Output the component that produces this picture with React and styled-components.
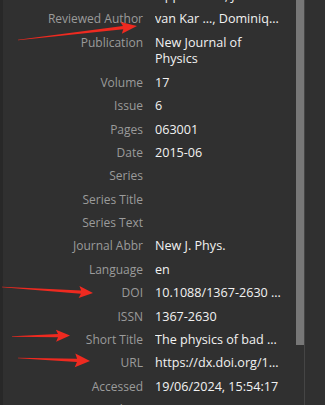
import React from "react";
import styled, { createGlobalStyle } from "styled-components";

const GlobalStyle = createGlobalStyle`
  html, body {
    margin: 0;
    padding: 0;
    height: 100%;
    overflow: hidden;
    background: #303030;
  }
  #root {
    height: 100%;
  }
`;

const fields = [
  { label: "Reviewed Author", value: "Oppenheim, Jonathan" },
  { label: "Reviewed Author", value: "van Kar …, Dominiq…" },
  { label: "Publication", value: "New Journal of Physics", wrap: true },
  { label: "Volume", value: "17" },
  { label: "Issue", value: "6" },
  { label: "Pages", value: "063001" },
  { label: "Date", value: "2015-06" },
  { label: "Series", value: "" },
  { label: "Series Title", value: "" },
  { label: "Series Text", value: "" },
  { label: "Journal Abbr", value: "New J. Phys." },
  { label: "Language", value: "en" },
  { label: "DOI", value: "10.1088/1367-2630 …" },
  { label: "ISSN", value: "1367-2630" },
  { label: "Short Title", value: "The physics of bad …" },
  { label: "URL", value: "https://dx.doi.org/1…" },
  { label: "Accessed", value: "19/06/2024, 15:54:17" },
  { label: "Archive", value: "" },
];

// annotation arrows drawn over the screenshot: tail, tip, head length, head half-width
const arrows = [
  { t: [18, 40], h: [137, 26], len: 14, half: 6 },
  { t: [2, 287], h: [93, 293], len: 12, half: 6 },
  { t: [12, 336.5], h: [70, 335.5], len: 12, half: 6 },
  { t: [18, 358], h: [90, 361], len: 13, half: 7 },
];

function arrowPoints({ t, h, len, half }) {
  const dx = h[0] - t[0];
  const dy = h[1] - t[1];
  const l = Math.hypot(dx, dy);
  const ux = dx / l;
  const uy = dy / l;
  const nx = -uy;
  const ny = ux;
  const bx = h[0] - ux * len;
  const by = h[1] - uy * len;
  const pt = (x, y) => `${x.toFixed(2)},${y.toFixed(2)}`;
  return [
    pt(t[0] + nx * 0.3, t[1] + ny * 0.3),
    pt(bx + nx * 1.6, by + ny * 1.6),
    pt(bx - ux * 2 + nx * half, by - uy * 2 + ny * half),
    pt(h[0], h[1]),
    pt(bx - ux * 2 - nx * half, by - uy * 2 - ny * half),
    pt(bx - nx * 1.6, by - ny * 1.6),
    pt(t[0] - nx * 0.3, t[1] - ny * 0.3),
  ].join(" ");
}

function App() {
  return (
    <>
      <GlobalStyle />
      <Window>
        <Edge />
        <Pane>
          <Fields>
            {fields.map((f, i) => (
              <Row key={i}>
                <Label>{f.label}</Label>
                <Value $wrap={f.wrap}>{f.value}</Value>
              </Row>
            ))}
          </Fields>
        </Pane>
        <ScrollTrack>
          <Thumb />
        </ScrollTrack>
        <Splitter />
        <SidePane />
        <Annotations viewBox="0 0 325 405">
          {arrows.map((a, i) => (
            <polygon key={i} points={arrowPoints(a)} fill="#ee2a20" />
          ))}
        </Annotations>
      </Window>
    </>
  );
}

const Window = styled.div`
  position: relative;
  display: flex;
  width: 325px;
  height: 405px;
  overflow: hidden;
  background: #303030;
  font-family: "Open Sans", "Noto Sans", sans-serif;
  font-size: 12px;
`;

const Edge = styled.div`
  width: 3px;
  flex: none;
  background: #282828;
`;

const Pane = styled.div`
  flex: 1;
  min-width: 0;
  overflow: hidden;
`;

const Fields = styled.div`
  display: flex;
  flex-direction: column;
  margin-top: -15.5px;
`;

const Row = styled.div`
  display: grid;
  grid-template-columns: 140px minmax(0, 1fr);
  column-gap: 12px;
  padding: 3.35px 12px 3.35px 0;
  line-height: 16.7px;
`;

const Label = styled.div`
  text-align: right;
  color: #9b9b9b;
  white-space: nowrap;
`;

const Value = styled.div`
  color: #f2f2f2;
  font-size: 12.6px;
  white-space: ${(p) => (p.$wrap ? "normal" : "nowrap")};
  overflow: hidden;
  min-height: 16.7px;
  padding-right: ${(p) => (p.$wrap ? "30px" : "0")};
`;

const ScrollTrack = styled.div`
  width: 8px;
  flex: none;
  background: #303030;
`;

const Thumb = styled.div`
  height: 345px;
  background: #777777;
`;

const Splitter = styled.div`
  width: 1px;
  flex: none;
  background: #454545;
`;

const SidePane = styled.div`
  flex: 0 0 20px;
  background: #303030;
`;

const Annotations = styled.svg`
  position: absolute;
  inset: 0;
  width: 325px;
  height: 405px;
  pointer-events: none;
`;

export default App;
